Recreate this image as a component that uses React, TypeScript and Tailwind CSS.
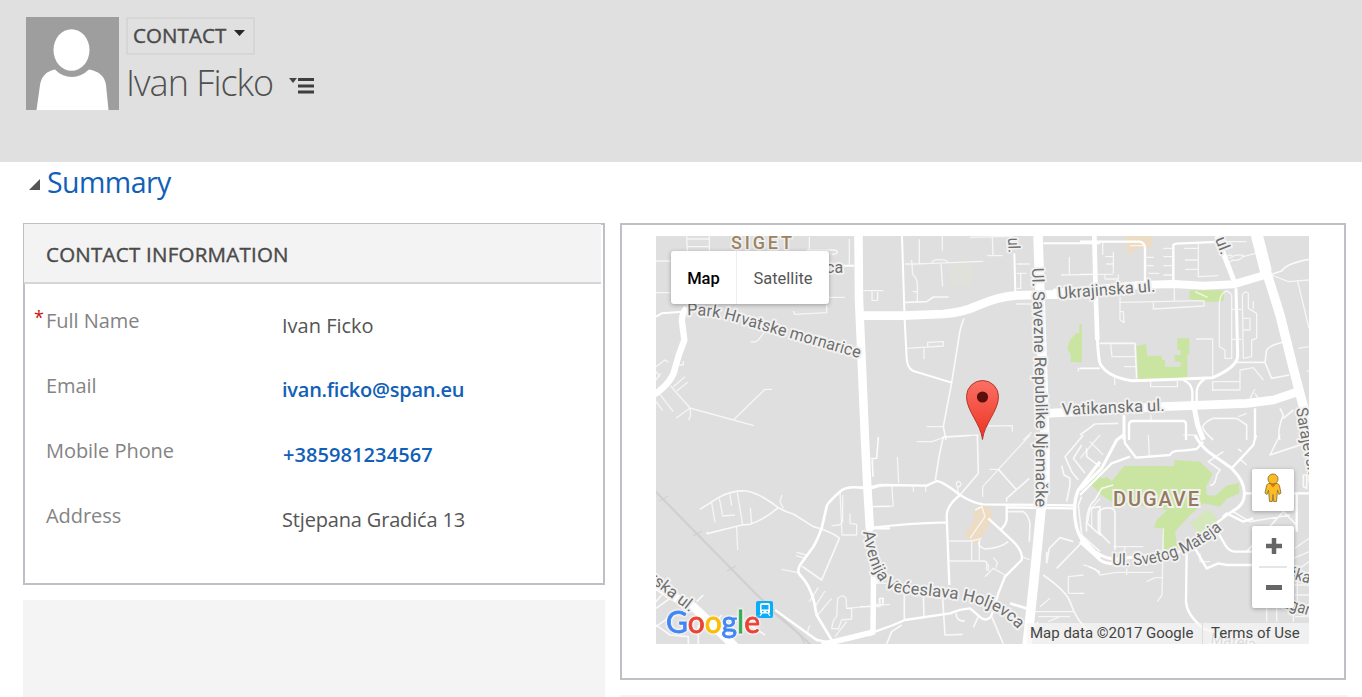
import React from "react";

type Road = [width: number, d: string];

interface Tile {
  x: number;
  y: number;
  areas: [fill: string, d: string][];
  roads: Road[];
}

const GREEN = "#cae5a2";
const SAND = "#eddcc4";

// Each tile is drawn on a grid three times finer than the map itself.
const TILES: Tile[] = [
  {
    x: 650,
    y: 225,
    areas: [],
    roads: [
      [4, "M110 33L112 78M178 33V78M112 42H180M112 65H180M18 108H62M18 203H62M430 258L434 268L530 263V240M530 217H585M598 42V122"],
      [4, "M470 75H550Q562 75 562 82Q558 88 545 88M478 35V75M350 312L325 345Q318 352 302 351M30 508L70 560M18 530L38 557M105 455L70 485M113 472L80 498"],
      [4, "M62 483L120 549L250 585L312 602M250 585L345 493H366M120 549L78 580M120 549L122 570L116 586M18 425L45 405L55 412M78 420H100V408M18 440L30 455M18 465L32 445M640 197H700M666 197V226H683V200"],
      [6, "M18 275L35 265L100 260M545 122H612"],
      [19, "M110 248Q94 270 96 290L103 345Q85 390 75 430Q68 470 14 508"],
    ],
  },
  {
    x: 860,
    y: 225,
    areas: [
      ["#e0e1da", "M265 117H338V180L270 185Z"],
      [GREEN, "M658 298H666V412H632V390L622 370L630 345L648 325H658Z"],
    ],
    roads: [
      [4, "M178 43V117M135 117H165L217 115L370 109M215 115Q220 102 240 104Q262 104 265 114M247 33V77M243 117L248 185M155 105L158 148Q172 160 172 180V230M158 200H172"],
      [4, "M330 37L460 34M397 37L399 92H428M382 92H400M468 237H520M470 117H510M470 145H500M482 145V190H470M140 370L250 363V350L203 352V365M192 370V403M200 605H250"],
      [4, "M250 635Q300 632 355 630M385 603L457 602V620M628 95V150M603 150L700 148M655 440V430H720M55 636V645M490 645L515 622"],
      [5, "M135 232L200 230L220 216H266M312 280Q300 310 298 330L275 473L250 605L258 645"],
      [6, "M126 33L134 285L140 400Q142 430 160 438L275 473M463 85L466 200M550 55H720"],
      [26, "M0 272H130L250 267Q310 262 350 243Q420 213 470 211L600 208"],
    ],
  },
  {
    x: 1080,
    y: 225,
    areas: [
      [SAND, "M137 33H215V68L165 70L152 92L140 75Z"],
      [GREEN, "M328 200Q330 196 340 196H425Q432 198 432 208V225Q425 232 380 230L328 222Z"],
      [GREEN, "M170 363L198 358L202 392H243L248 405H255V425H302V412L286 410L282 390H302V376L292 374V340H328V388H322V458L174 465Z"],
    ],
    roads: [
      [4, "M68 50V90M100 80V145M75 95H100M78 117H100M150 62H190M0 148H100M75 150V162H115V148M195 97H222M195 122H222M205 145H238M313 70H355M315 105H355M315 133H355M355 55V155L415 152M250 70H280M250 95H280M250 122H280M250 150H280"],
      [4, "M283 190V228M122 232L372 227V243L220 252V232M120 215V285L132 293L130 260H122M435 200Q418 210 418 240V365L435 375V400H455V210Q445 195 435 200M487 210Q495 195 505 205V250L530 265V340L515 345V395L490 400Z"],
      [4, "M490 280H510V315H490M455 253H485M455 343H485M520 228V253M575 150L625 170L687 165M652 165L687 310M655 370L687 365M680 438H687M345 200L383 217"],
      [4, "M398 498V470H480V495H400M398 455V342H348M480 470V435L520 428L550 465M92 358L96 395H168M132 425H168M212 468V485H292V468M104 455V480M213 585V570M475 575L500 565"],
      [4, "M510 520L525 492M525 505L535 520M460 95Q450 85 440 95M448 100Q470 85 490 92Q480 110 458 105L442 115M490 95L525 85M430 50H500"],
      [5, "M575 148L605 138Q620 115 687 103M470 412H555L560 375Q570 360 615 350M555 412L575 460L628 450M58 355H165L170 460M0 430H60M0 630L45 597L115 595M600 550L610 570Q590 620 600 645M640 555L610 580M400 645Q370 620 368 605Q375 590 400 580H470L500 600V645"],
      [7, "M0 50H180Q195 55 195 70V170M280 180V60Q283 56 290 56L430 50M310 465Q335 475 337 500V530M375 462Q352 475 350 500V530M525 550V645M147 645V600Q147 588 160 588H310Q318 588 318 600V645"],
      [9, "M52 340Q55 400 60 415Q80 455 155 467L290 463L398 458Q475 425 473 390L468 190M132 570V645"],
      [15, "M343 550L353 600L370 645M410 33L465 175"],
      [14, "M43 33L47 200L52 345"],
      [24, "M-80 203L0 197L180 180L280 177L370 182L460 178L555 150"],
      [26, "M-100 565L0 560L250 545L500 535L580 525L655 500"],
      [36, "M530 28L558 140"],
      [28, "M553 120L600 270L640 430L670 545L700 640"],
    ],
  },
  {
    x: 650,
    y: 435,
    areas: [],
    roads: [
      [4, "M185 203L195 262M208 190L218 243L255 240M240 178L245 213M262 172L278 270M301 218L305 265M260 275L263 345M400 220L390 200L396 180M440 352L468 360M438 362L465 370M395 403L445 413"],
      [4, "M570 170L576 300H620V268L600 265V235M578 180V260Q575 272 545 272M505 457L478 500M525 468L495 515M545 490L503 540M545 580Q550 550 560 545L563 490Q580 475 588 490L590 520H605V552L575 555L565 582Z"],
      [4, "M590 520L720 508M670 445H720M688 505V490H698V505M555 605L590 560M480 570Q470 585 475 600L515 618M610 615V600M665 215H720M665 72L680 70L685 5M668 70V125"],
      [5, "M140 500L160 480M18 500L35 480M18 520L60 490M18 570L60 600L115 605V627M145 570V627M18 575L60 545M300 570L345 600M215 540L190 570"],
      [5, "M150 223L210 185Q250 165 290 168Q330 175 385 218Q405 230 430 237L490 275L515 282Q560 300 568 310L515 435L455 393M385 218Q340 255 300 268L275 270L172 296V290"],
      [8, "M645 160Q590 150 570 170Q530 205 530 215L515 280Q500 320 490 335L450 390Q440 410 450 420Q480 450 492 500L500 540L545 615"],
      [7, "M375 525L500 615L540 622M663 160Q700 148 720 150M665 280H720"],
      [26, "M-10 430L60 480L130 515L255 635"],
      [17, "M515 629L674 590"],
    ],
  },
  {
    x: 860,
    y: 435,
    areas: [[SAND, "M340 225L370 212H385L400 245L385 275L350 328L313 302L342 255Z"]],
    roads: [
      [4, "M20 215L100 213L95 150M112 65L116 145M30 70H50L55 10M35 75L40 125M160 155V170M197 155V170M170 20H215L250 8L330 2M300 155Q285 155 290 142Q300 135 303 148Q300 158 292 155L295 175M510 0L368 155V185M388 103H415"],
      [4, "M268 318H335L365 310M268 378H335V315M358 320V378L380 380V405Q388 410 385 390L375 378H335M375 425L400 400L435 420M400 368L412 382L408 398M487 365L510 375M0 515H60V490H70V508H50V515M365 212L375 245L330 310"],
      [4, "M510 530H640M535 545H630M540 515L570 490M565 560L600 545M625 475V425L670 420M625 475H672M670 390Q700 395 720 415M510 590L535 560"],
      [5, "M250 5L238 60L226 135M352 0L355 115L300 180M415 103L470 165M440 200V190L508 130M445 230H490Q505 240 510 265L508 320M360 315Q350 335 375 342Q420 340 445 320M345 225L365 215M248 490L255 600L308 598M190 480L192 545M133 475V555M288 535Q290 560 315 558M355 545L340 577M395 545L430 627M80 627L95 590L125 570"],
      [5, "M550 420Q620 470 630 500Q650 560 690 590M560 385L568 340L600 308L640 320M668 320L590 400M560 350V385M670 0L615 65L635 110L655 135M665 30L640 70L675 115M680 40V65L720 95M605 92L612 120L630 130V150L620 200"],
      [5, "M665 185L655 210L665 300L720 350M682 265L690 220L720 215V300L682 265"],
      [7, "M300 180Q262 210 260 240L268 450M40 278Q140 265 258 262M440 210V255Q435 275 420 285M440 217L640 220M385 250L460 320Q490 350 485 375L435 425L415 475L395 540Q385 560 365 550L330 520Q300 522 270 535L135 555L100 570L45 590"],
      [7, "M0 158H25L60 150L200 152L230 138Q250 140 300 180Q340 205 370 208L640 211"],
      [10, "M720 80L655 165Q640 200 645 250Q650 300 680 335L720 370"],
      [8, "M40 445L70 430M450 505L515 525"],
    ],
  },
  {
    x: 1080,
    y: 435,
    areas: [
      [GREEN, "M28 145L50 123L68 130L80 125L95 138L133 93H282L284 75L360 80L398 118L378 155L380 180L405 182L440 152L478 143V175L440 192L420 215L370 205L330 240L285 290L295 350L252 355L246 280L222 278L230 255L262 225L182 212L100 205L62 178L55 170Z"],
      ["#d4e8bb", "M330 265L385 222L415 255L362 300Z"],
    ],
    roads: [
      [4, "M345 0L310 0M250 280L246 480L232 500M200 440L225 428H250M45 400L60 420L110 412H220M25 395L60 410M140 400V420M100 335H160M35 280V220L60 190M130 365L135 335H190M205 0L208 65M0 475H10"],
      [4, "M640 430V560M640 450H687M645 410L687 380M645 480H687M560 520V560M590 520V560M645 340L687 310M640 370L687 350M645 545H687M652 430V500M30 20L70 60M0 70L60 0M360 355V380H390"],
      [5, "M20 290Q15 220 45 195L65 160L100 150M105 345V230Q100 215 70 220L55 230V290L90 325M478 70L500 90M485 50L475 42M390 150Q405 155 410 120L420 105L385 80L430 50M690 20L570 60L600 0M460 230L510 260L630 240M500 350L610 230L650 270M680 120V160L670 155V120Z"],
      [7, "M0 180L95 85L150 65M132 0L135 25L168 68L270 60Q275 45 310 47L350 42L370 20M495 175H687M528 0L520 30L455 100M650 175V290M455 230L415 260L300 350M455 230L430 245L440 235L490 260L520 250M412 290L430 320Q445 350 465 350H520M320 355L318 500Q320 540 370 580L420 600M345 340L380 400L415 385L440 390H520"],
      [9, "M0 165L65 100L110 15L130 0M345 0Q360 30 385 50L455 100Q495 140 493 175Q495 210 455 230M0 300L45 350Q90 380 130 370L300 350M0 320L60 375Q80 390 120 385"],
    ],
  },
];

const HALO = "fill-[#6e6e6e] stroke-[#f1f1f1] stroke-[4px] [paint-order:stroke] [stroke-linejoin:round]";

interface CurvedLabel {
  id: string;
  d: string;
  text: string;
  length: number;
}

const CURVED: CurvedLabel[] = [
  { id: "park", d: "M687 315.500C712 314 732 321 750 326.500L866 360", text: "Park Hrvatske mornarice", length: 178 },
  { id: "savezne", d: "M1032 268L1033 300L1036 420L1035.500 512", text: "Ul. Savezne Republike Njemačke", length: 239 },
  { id: "ukr", d: "M1058 299L1160 291", text: "Ukrajinska ul.", length: 98 },
  { id: "vat", d: "M1062 415L1170 410.500", text: "Vatikanska ul.", length: 103 },
  { id: "aven", d: "M863 532C868 556 873 590 902 593C945 599 992 595 1022 634", text: "Avenija Većeslava Holjevca", length: 203 },
  { id: "svetog", d: "M1112 565C1150 567 1185 562 1230 523", text: "Ul. Svetog Mateja", length: 119 },
  { id: "saraj", d: "M1296 409Q1300 435 1312 490", text: "Sarajevska", length: 76 },
  { id: "ska", d: "M648 580L700 620", text: "rska ul.", length: 53 },
  { id: "ulne", d: "M1215 239L1226 268", text: "ul.", length: 18 },
  { id: "uln", d: "M1008 238L1009 265", text: "ul.", length: 15 },
  { id: "kan", d: "M1287 577L1320 587", text: "ška", length: 23 },
  { id: "gan", d: "M1281 607L1330 622", text: "ugan.", length: 36 },
];

function MapCanvas() {
  return (
    <svg viewBox="656 236 653 408" className="block h-[408px] w-[653px] font-['Roboto',sans-serif]">
      <rect x="656" y="236" width="653" height="408" fill="#dfdfdf" />
      {TILES.map((t) => (
        <g key={`a${t.x}-${t.y}`} transform={`translate(${t.x} ${t.y}) scale(0.33333)`}>
          {t.areas.map(([fill, d]) => (
            <path key={d} d={d} fill={fill} />
          ))}
        </g>
      ))}
      <g fill="none" stroke="#d0d0d0" strokeWidth="2.2">
        <path d="M654 490L756 594L812 646" />
        <path d="M770 610L800 635L806 646" strokeWidth="1.3" />
        <path d="M659 501L668 496M693 536L702 531M727 571L736 566" strokeWidth="1.2" />
      </g>
      {TILES.map((t) => (
        <g
          key={`r${t.x}-${t.y}`}
          transform={`translate(${t.x} ${t.y}) scale(0.33333)`}
          fill="none"
          stroke="#fff"
          strokeLinejoin="round"
        >
          {t.roads.map(([w, d]) => (
            <path key={d} d={d} strokeWidth={w} opacity={w < 5 ? 0.7 : w < 6 ? 0.8 : 1} />
          ))}
        </g>
      ))}
      <g fill="none" stroke="#fff" strokeLinejoin="round">
        <path d="M858.500 236L859 300L862.500 380L865 440L867.500 490L870 530" strokeWidth="8.500" />
        <path d="M865 440L869 520L873.500 575L873 632L868 634" strokeWidth="5.500" />
        <path d="M1038 236L1041 325L1045 440L1045 480L1041 510L1034 580L1027 646" strokeWidth="9.500" />
      </g>
      <text x="731" y="248.500" fontSize="18" fontWeight="500" textLength="61" className="fill-[#9c8462] stroke-[#f1f1f1] stroke-[3px] [paint-order:stroke]">SIGET</text>
      <text x="1113" y="506" fontSize="20" fontWeight="500" textLength="86" className="fill-[#957a5c] stroke-[#f1f1f1] stroke-[4px] [paint-order:stroke]">DUGAVE</text>
      <text x="826" y="273" fontSize="16" className={HALO}>ca</text>
      {CURVED.map((l) => (
        <g key={l.id}>
          <path id={l.id} d={l.d} fill="none" />
          <text fontSize="16.500" className={HALO} textLength={l.length} lengthAdjust="spacingAndGlyphs">
            <textPath href={`#${l.id}`} textLength={l.length} lengthAdjust="spacingAndGlyphs">{l.text}</textPath>
          </text>
        </g>
      ))}
      <text x="1210" y="643" fontSize="15" transform="rotate(8 1210 643)" className="fill-[#8a8a8a] stroke-[#f1f1f1] stroke-[3px] [paint-order:stroke]">Mateja</text>

      <g>
        <rect x="756" y="601" width="17" height="17" rx="2" fill="#09aefa" />
        <path fillRule="evenodd" d="M762 603H768Q770 603 770 605V612Q770 613.500 768.500 613.500H761.500Q760 613.500 760 612V605Q760 603 762 603ZM761.500 605V609.500H768.500V605ZM762 611V612.300H763.500V611ZM766.500 611V612.300H768V611Z" fill="#fff" />
        <path d="M762 613L760 616M768 613L770 616" stroke="#fff" strokeWidth="1.3" />
      </g>

      <text x="666" y="633" fontSize="31" textLength="94" lengthAdjust="spacingAndGlyphs" strokeWidth="0.8" className="font-['Lato',sans-serif] [filter:drop-shadow(0_0_1px_#fff)_drop-shadow(0_0_1px_#fff)]">
        <tspan fill="#4285f4" stroke="#4285f4">G</tspan>
        <tspan fill="#ea4335" stroke="#ea4335">o</tspan>
        <tspan fill="#fbbc05" stroke="#fbbc05">o</tspan>
        <tspan fill="#4285f4" stroke="#4285f4">g</tspan>
        <tspan fill="#34a853" stroke="#34a853">l</tspan>
        <tspan fill="#ea4335" stroke="#ea4335">e</tspan>
      </text>

      <defs>
        <linearGradient id="pin" x1="0" y1="0" x2="0" y2="1">
          <stop offset="0" stopColor="#fb7064" />
          <stop offset="1" stopColor="#ea3323" />
        </linearGradient>
      </defs>
      <path d="M982.500 439.500C981 424 966.500 411 966.500 396.500A16 16 0 0 1 998.500 396.500C998.500 411 984 424 982.500 439.500Z" fill="url(#pin)" stroke="#b5362c" />
      <circle cx="982.500" cy="397" r="5.600" fill="#590f0c" />
    </svg>
  );
}

function Pegman() {
  return (
    <svg viewBox="0 0 18 30" className="h-[30px] w-[18px]">
      <path d="M4.500 10.500H13.500Q15 11 15.500 13L17 20L15 21.500L13.500 17L12.500 28.500H9.700L9 21.500L8.300 28.500H5.500L4.500 17L3 21.500L1 20L2.500 13Q3 11 4.500 10.500Z" fill="#fbbc24" stroke="#8d7638" strokeWidth="0.9" />
      <path d="M6 11H12L9 14.500Z" fill="#e8710a" />
      <circle cx="9" cy="6" r="5" fill="#fbbc24" stroke="#8d7638" strokeWidth="0.9" />
    </svg>
  );
}

function Field({ label, required, children }: { label: string; required?: boolean; children: React.ReactNode }) {
  return (
    <div className="flex h-[65px] items-start">
      <div className="w-[12px] shrink-0 text-[18px] leading-[20px] text-[#c8140c]">{required ? "*" : ""}</div>
      <div className="w-[236px] shrink-0 text-[20px] leading-7 tracking-[-0.05px] text-[#848484]">{label}</div>
      <div className="pt-1 text-[20px] leading-7 text-[#555]">{children}</div>
    </div>
  );
}

export default function App() {
  return (
    <div className="flex h-[697px] w-[1362px] flex-col overflow-hidden bg-white font-['Open_Sans','Noto_Sans',sans-serif]">
      <header className="flex h-[162px] shrink-0 items-start bg-[#e0e0e0] pl-[26px] pt-[17px]">
        <svg viewBox="0 0 93 93" className="h-[93px] w-[93px] shrink-0">
          <rect width="93" height="93" fill="#9e9e9e" />
          <ellipse cx="45.500" cy="33" rx="18" ry="20.800" fill="#fff" />
          <path d="M10.500 93L14 68Q16 55 29 52.500Q36 60 46 60Q55 60 63 52.500Q78 55 80 68L82.500 93Z" fill="#fff" />
        </svg>
        <div className="ml-[7px] flex flex-col items-start">
          <div className="flex h-[38px] w-[129px] items-center border-2 border-[#d6d6d6] pl-[5px]">
            <span className="w-[95px] whitespace-nowrap pb-[2px] text-[20.5px] tracking-[0.1px] text-[#4a4a4a] [-webkit-text-stroke:0.4px_#4a4a4a]">CONTACT</span>
            <svg viewBox="0 0 11 6" className="-mt-1.5 ml-[6px] h-[6px] w-[11px]"><path d="M0 0H11L5.500 6Z" fill="#262626" /></svg>
          </div>
          <div className="flex items-center pt-1">
            <h1 className="w-[163px] whitespace-nowrap text-[36px] font-light leading-[48px] tracking-[-1px] text-[#505050]">Ivan Ficko</h1>
            <svg viewBox="0 0 26 16" className="mt-[5px] h-[16px] w-[26px]">
              <path d="M0 0H8L4 5Z" fill="#444" />
              <path d="M9 1.500H25M9 8H25M9 14H25" stroke="#3e3e3e" strokeWidth="3" />
            </svg>
          </div>
        </div>
      </header>

      <div className="flex h-[61px] shrink-0 items-start pl-[29px]">
        <svg viewBox="0 0 11 11" className="mt-[17px] h-[11px] w-[11px]"><path d="M11 0V11H0Z" fill="#555" /></svg>
        <h2 className="ml-[7px] text-[28.5px] leading-[41px] tracking-[-0.55px] text-[#1160b7]">Summary</h2>
      </div>

      <main className="flex items-start gap-[15px] pl-[23px]">
        <div className="flex w-[582px] flex-col gap-[15px]">
          <section className="h-[362px] border-2 border-[#bdc1c5]">
            <div className="-ml-px -mt-px mr-[2px] flex h-[60px] items-center border-b-2 border-[#d6d6d6] bg-[#f3f3f3] pl-[22px] pt-[3px] text-[20.5px] tracking-[0.24px] text-[#4a4a4a] [-webkit-text-stroke:0.4px_#4a4a4a]">
              CONTACT INFORMATION
            </div>
            <div className="flex flex-col pl-[9px] pt-[23px]">
              <Field label="Full Name" required><span className="relative top-px">Ivan Ficko</span></Field>
              <Field label="Email"><a className="font-semibold tracking-[-0.24px] text-[#1160b7]">ivan.ficko@span.eu</a></Field>
              <Field label="Mobile Phone"><a className="ml-px font-semibold tracking-[0.08px] text-[#1160b7]">+385981234567</a></Field>
              <Field label="Address"><span className="tracking-[-0.17px]">Stjepana Gradića 13</span></Field>
            </div>
          </section>
          <section className="h-[97px] bg-[#f4f4f4]" />
        </div>

        <div className="flex w-[728px] flex-col gap-[15px]">
          <section className="mr-[2px] h-[457px] border-2 border-[#bdc1c5] pl-[34px] pt-[11px]">
            <div className="relative h-[408px] w-[653px] overflow-hidden font-['Roboto',sans-serif]">
              <MapCanvas />
              <div className="absolute left-[15px] top-[15px] flex h-[53px] rounded-[3px] bg-white text-[16.5px] shadow-[0_1px_4px_rgba(0,0,0,0.3)]">
                <div className="flex w-[66px] items-center justify-center border-r border-[#eee] pt-[3px] font-medium text-black">Map</div>
                <div className="flex w-[92px] items-center justify-center pt-[3px] text-[#565656]">Satellite</div>
              </div>
              <div className="absolute left-[596px] top-[233px] flex h-[42px] w-[42px] items-center justify-center rounded-[2px] bg-white pb-1 shadow-[0_1px_4px_rgba(0,0,0,0.3)]">
                <Pegman />
              </div>
              <div className="absolute left-[596px] top-[290px] flex h-[82px] w-[42px] flex-col items-center rounded-[2px] bg-white shadow-[0_1px_4px_rgba(0,0,0,0.3)]">
                <svg viewBox="0 0 16 16" className="ml-[2px] mt-[12px] h-4 w-4"><path d="M8 0V16M0 8H16" stroke="#666" strokeWidth="4.500" /></svg>
                <div className="mt-[12px] h-[2px] w-[28px] bg-[#e6e6e6]" />
                <div className="ml-[2px] mt-[17px] h-[5px] w-4 bg-[#666]" />
              </div>
              <div className="absolute bottom-0 right-0 flex h-[21px] w-[282px] items-center bg-[#f5f5f5]/75 text-[15px] text-[#444]">
                <span className="w-[176px] whitespace-nowrap border-r border-[#ddd] pl-[3px]">Map data ©2017 Google</span>
                <span className="whitespace-nowrap pl-[8px]">Terms of Use</span>
              </div>
            </div>
          </section>
          <section className="h-[2px] bg-[#f4f4f4]" />
        </div>
      </main>
    </div>
  );
}
